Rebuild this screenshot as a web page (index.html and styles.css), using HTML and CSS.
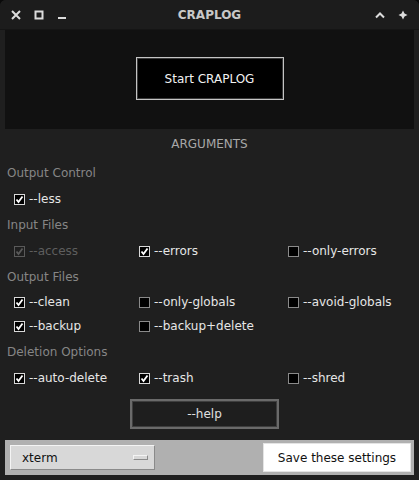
FILE: index.html
```html
<!DOCTYPE html>
<html>
<head>
<meta charset="utf-8">
<link rel="stylesheet" href="styles.css">
</head>
<body>
<div class="window">
  <div class="titlebar">
    <div class="tb-left">
      <svg class="tb-icon" width="10" height="10" viewBox="0 0 10 10"><path d="M1 1L9 9M9 1L1 9" stroke="#dcdcdc" stroke-width="2" fill="none"/></svg>
      <svg class="tb-icon" width="10" height="10" viewBox="0 0 10 10"><rect x="1.5" y="1.5" width="7" height="7" stroke="#dcdcdc" stroke-width="2" fill="none"/></svg>
      <svg class="tb-icon" width="10" height="10" viewBox="0 0 10 10"><rect x="1" y="7" width="8" height="2" fill="#dcdcdc"/></svg>
    </div>
    <div class="tb-title">CRAPLOG</div>
    <div class="tb-right">
      <svg class="tb-icon" width="10" height="10" viewBox="0 0 10 10"><path d="M1 7.5L5 3.5L9 7.5" stroke="#dcdcdc" stroke-width="2" fill="none"/></svg>
      <svg class="tb-icon" width="10" height="10" viewBox="0 0 10 10"><path d="M5 0.5L6.5 3.5L9.5 5L6.5 6.5L5 9.5L3.5 6.5L0.5 5L3.5 3.5Z" fill="#dcdcdc"/></svg>
    </div>
  </div>

  <div class="top-panel">
    <button class="start-btn">Start CRAPLOG</button>
  </div>

  <div class="arguments">ARGUMENTS</div>

  <div class="section-label">Output Control</div>
  <div class="check-row">
    <label class="check"><span class="box checked"><svg viewBox="0 0 9 9" width="9" height="9"><path d="M1.5 4.5L3.5 7L7.5 1.5" stroke="#fff" stroke-width="1.8" fill="none"/></svg></span>--less</label>
  </div>

  <div class="section-label">Input Files</div>
  <div class="check-row">
    <label class="check disabled"><span class="box checked"><svg viewBox="0 0 9 9" width="9" height="9"><path d="M1.5 4.5L3.5 7L7.5 1.5" stroke="#5a5a5a" stroke-width="1.8" fill="none"/></svg></span>--access</label>
    <label class="check"><span class="box checked"><svg viewBox="0 0 9 9" width="9" height="9"><path d="M1.5 4.5L3.5 7L7.5 1.5" stroke="#fff" stroke-width="1.8" fill="none"/></svg></span>--errors</label>
    <label class="check"><span class="box"></span>--only-errors</label>
  </div>

  <div class="section-label">Output Files</div>
  <div class="check-row tight">
    <label class="check"><span class="box checked"><svg viewBox="0 0 9 9" width="9" height="9"><path d="M1.5 4.5L3.5 7L7.5 1.5" stroke="#fff" stroke-width="1.8" fill="none"/></svg></span>--clean</label>
    <label class="check"><span class="box"></span>--only-globals</label>
    <label class="check"><span class="box"></span>--avoid-globals</label>
  </div>
  <div class="check-row tight">
    <label class="check"><span class="box checked"><svg viewBox="0 0 9 9" width="9" height="9"><path d="M1.5 4.5L3.5 7L7.5 1.5" stroke="#fff" stroke-width="1.8" fill="none"/></svg></span>--backup</label>
    <label class="check"><span class="box"></span>--backup+delete</label>
  </div>

  <div class="section-label spaced">Deletion Options</div>
  <div class="check-row">
    <label class="check"><span class="box checked"><svg viewBox="0 0 9 9" width="9" height="9"><path d="M1.5 4.5L3.5 7L7.5 1.5" stroke="#fff" stroke-width="1.8" fill="none"/></svg></span>--auto-delete</label>
    <label class="check"><span class="box checked"><svg viewBox="0 0 9 9" width="9" height="9"><path d="M1.5 4.5L3.5 7L7.5 1.5" stroke="#fff" stroke-width="1.8" fill="none"/></svg></span>--trash</label>
    <label class="check"><span class="box"></span>--shred</label>
  </div>

  <div class="help-wrap">
    <button class="help-btn">--help</button>
  </div>

  <div class="bottom-bar">
    <div class="dropdown">
      <span>xterm</span>
      <span class="indicator"></span>
    </div>
    <button class="save-btn">Save these settings</button>
  </div>
</div>
</body>
</html>
```
FILE: styles.css
```css
html, body {
  margin: 0;
  padding: 0;
  background: #0a0a0a;
}
body {
  width: 419px;
  height: 480px;
  overflow: hidden;
  font-family: "DejaVu Sans", sans-serif;
  font-size: 12px;
}
.window {
  width: 419px;
  height: 480px;
  background: #1f1f1f;
  border-radius: 6px 6px 0 0;
  display: flex;
  flex-direction: column;
}
.titlebar {
  height: 30px;
  box-sizing: border-box;
  border-bottom: 1px solid #151515;
  background: #1c1c1c;
  border-radius: 6px 6px 0 0;
  display: grid;
  grid-template-columns: 1fr auto 1fr;
  align-items: center;
}
.tb-left {
  display: flex;
  gap: 13px;
  padding-left: 11px;
  align-items: center;
}
.tb-right {
  display: flex;
  gap: 13px;
  justify-content: flex-end;
  padding-right: 11px;
  align-items: center;
}
.tb-icon {
  display: block;
}
.tb-title {
  font-weight: bold;
  color: #c8c8c8;
  font-size: 12px;
}
.top-panel {
  margin: 0 5px;
  height: 99px;
  background: #111111;
  display: flex;
  justify-content: center;
  align-items: flex-start;
}
.start-btn {
  margin-top: 27px;
  width: 148px;
  height: 43px;
  background: #000;
  color: #f2f2f2;
  border: 1px solid #c4c4c4;
  box-shadow: inset 0 0 0 1px #3a3a3a;
  font-family: "DejaVu Sans", sans-serif;
  font-size: 12px;
  padding: 0;
}
.arguments {
  height: 31px;
  line-height: 31px;
  text-align: center;
  color: #a8a8a8;
}
.section-label {
  height: 26px;
  line-height: 26px;
  padding-left: 7px;
  color: #868686;
}
.section-label.spaced {
  margin-top: 1px;
}
.check-row {
  height: 26px;
  display: grid;
  grid-template-columns: 125px 149px auto;
  padding-left: 14px;
  align-items: center;
  color: #e6e6e6;
}
.check-row.tight {
  height: 24px;
}
.check {
  display: flex;
  align-items: center;
  gap: 4px;
}
.box {
  width: 11px;
  height: 11px;
  box-sizing: border-box;
  border: 1px solid #8a8a8a;
  background: #000;
  display: flex;
  align-items: center;
  justify-content: center;
}
.box.checked {
  border-color: #d8d8d8;
}
.box svg {
  display: block;
}
.check.disabled {
  color: #5e5e5e;
}
.check.disabled .box {
  border-color: #5a5a5a;
  background: transparent;
}
.help-wrap {
  display: flex;
  justify-content: center;
  padding-right: 10px;
  margin-top: 8px;
}
.help-btn {
  width: 149px;
  height: 30px;
  background: #1e1e1e;
  color: #e0e0e0;
  border: 2px solid #6a6a6a;
  box-shadow: inset 0 0 0 1px #3e3e3e;
  font-family: "DejaVu Sans", sans-serif;
  font-size: 12px;
  padding: 0;
}
.bottom-bar {
  margin: 11px 5px 0;
  height: 35px;
  background: #b0b0b0;
  display: flex;
  align-items: center;
  justify-content: space-between;
  padding: 0 3px 0 5px;
}
.dropdown {
  width: 145px;
  height: 25px;
  box-sizing: border-box;
  background: #d8d8d8;
  border-top: 1px solid #f4f4f4;
  border-left: 1px solid #f4f4f4;
  border-bottom: 1px solid #8a8a8a;
  border-right: 1px solid #8a8a8a;
  display: flex;
  align-items: center;
  justify-content: space-between;
  padding: 0 6px 0 11px;
  color: #111;
}
.indicator {
  width: 15px;
  height: 5px;
  box-sizing: border-box;
  border-top: 1px solid #f4f4f4;
  border-left: 1px solid #f4f4f4;
  border-bottom: 1px solid #8a8a8a;
  border-right: 1px solid #8a8a8a;
  background: #d8d8d8;
}
.save-btn {
  width: 148px;
  height: 29px;
  background: #fff;
  color: #111;
  border: 1px solid #e4e4e4;
  font-family: "DejaVu Sans", sans-serif;
  font-size: 12px;
  padding: 0;
}
```
